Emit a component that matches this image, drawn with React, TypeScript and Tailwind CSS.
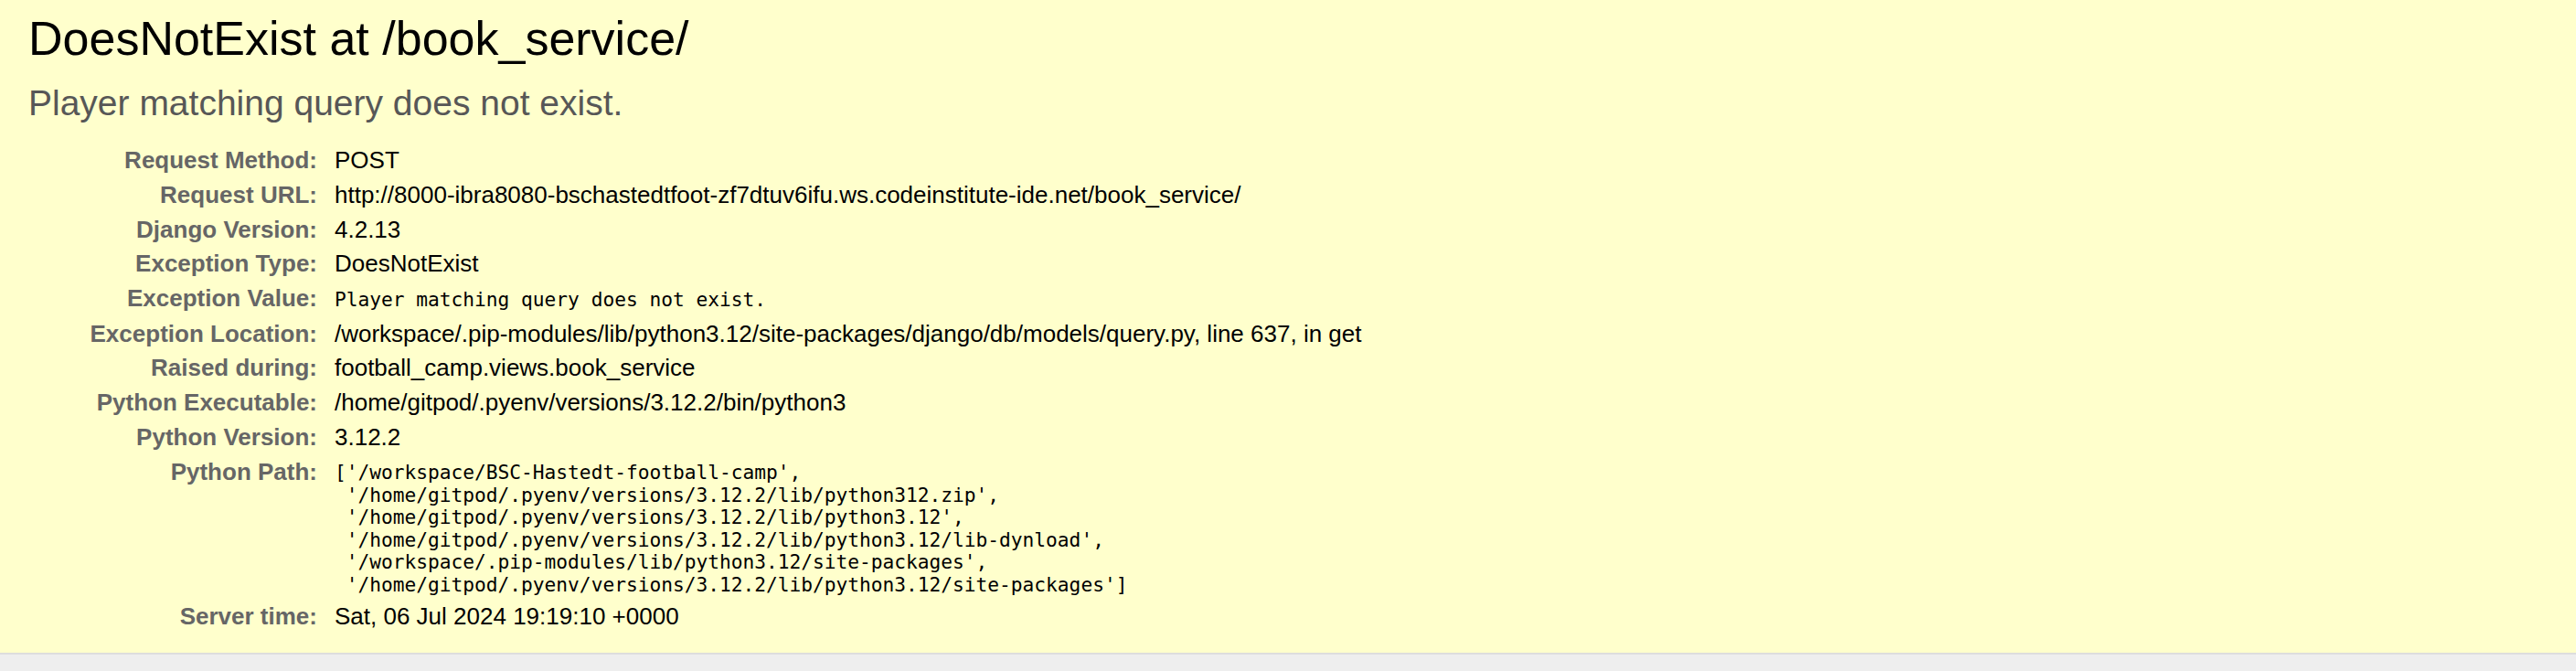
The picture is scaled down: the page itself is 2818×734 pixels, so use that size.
import React from 'react';

type Row = {
  label: string;
  value: string;
  mono?: boolean;
  block?: boolean;
};

const pythonPath = [
  "['/workspace/BSC-Hastedt-football-camp',",
  " '/home/gitpod/.pyenv/versions/3.12.2/lib/python312.zip',",
  " '/home/gitpod/.pyenv/versions/3.12.2/lib/python3.12',",
  " '/home/gitpod/.pyenv/versions/3.12.2/lib/python3.12/lib-dynload',",
  " '/workspace/.pip-modules/lib/python3.12/site-packages',",
  " '/home/gitpod/.pyenv/versions/3.12.2/lib/python3.12/site-packages']",
].join('\n');

const rows: Row[] = [
  { label: 'Request Method:', value: 'POST' },
  {
    label: 'Request URL:',
    value: 'http://8000-ibra8080-bschastedtfoot-zf7dtuv6ifu.ws.codeinstitute-ide.net/book_service/',
  },
  { label: 'Django Version:', value: '4.2.13' },
  { label: 'Exception Type:', value: 'DoesNotExist' },
  { label: 'Exception Value:', value: 'Player matching query does not exist.', mono: true },
  {
    label: 'Exception Location:',
    value: '/workspace/.pip-modules/lib/python3.12/site-packages/django/db/models/query.py, line 637, in get',
  },
  { label: 'Raised during:', value: 'football_camp.views.book_service' },
  { label: 'Python Executable:', value: '/home/gitpod/.pyenv/versions/3.12.2/bin/python3' },
  { label: 'Python Version:', value: '3.12.2' },
  { label: 'Python Path:', value: pythonPath, block: true },
  { label: 'Server time:', value: 'Sat, 06 Jul 2024 19:19:10 +0000' },
];

function MetaRow({ row }: { row: Row }) {
  return (
    <>
      <div className="py-[3.25px] pl-[5px] pr-[13px] text-right font-bold text-[#666] leading-[31.2px]">
        {row.label}
      </div>
      {row.block ? (
        <div className="pt-[8px] pb-[3px] pl-[6px]">
          <pre className="m-0 whitespace-pre font-['DejaVu_Sans_Mono',monospace] text-[21.2px] leading-[24.5px] text-black">
            {row.value}
          </pre>
        </div>
      ) : (
        <div className="py-[3.25px] pl-[6px] leading-[31.2px] text-black">
          {row.mono ? (
            <span className="font-['DejaVu_Sans_Mono',monospace] text-[21.2px]">{row.value}</span>
          ) : (
            row.value
          )}
        </div>
      )}
    </>
  );
}

export default function App() {
  return (
    <div className="flex min-h-screen flex-col bg-[#eee] font-['Liberation_Sans',Arial,sans-serif] text-black">
      {/* Summary block */}
      <header className="border-b-2 border-[#ddd] bg-[#ffc] px-[31px] pt-[12px] pb-[21px]">
        <h1 className="text-[52px] font-normal leading-[60px]">DoesNotExist at /book_service/</h1>
        <pre className="mt-[18px] font-['Liberation_Sans',Arial,sans-serif] text-[39px] leading-[46px] text-[#575757]">
          Player matching query does not exist.
        </pre>
        <div className="mt-[21px] grid grid-cols-[329px_1fr] text-[26px]">
          {rows.map((row) => (
            <MetaRow key={row.label} row={row} />
          ))}
        </div>
      </header>
      <div className="flex-1 bg-[#eee]" />
    </div>
  );
}
